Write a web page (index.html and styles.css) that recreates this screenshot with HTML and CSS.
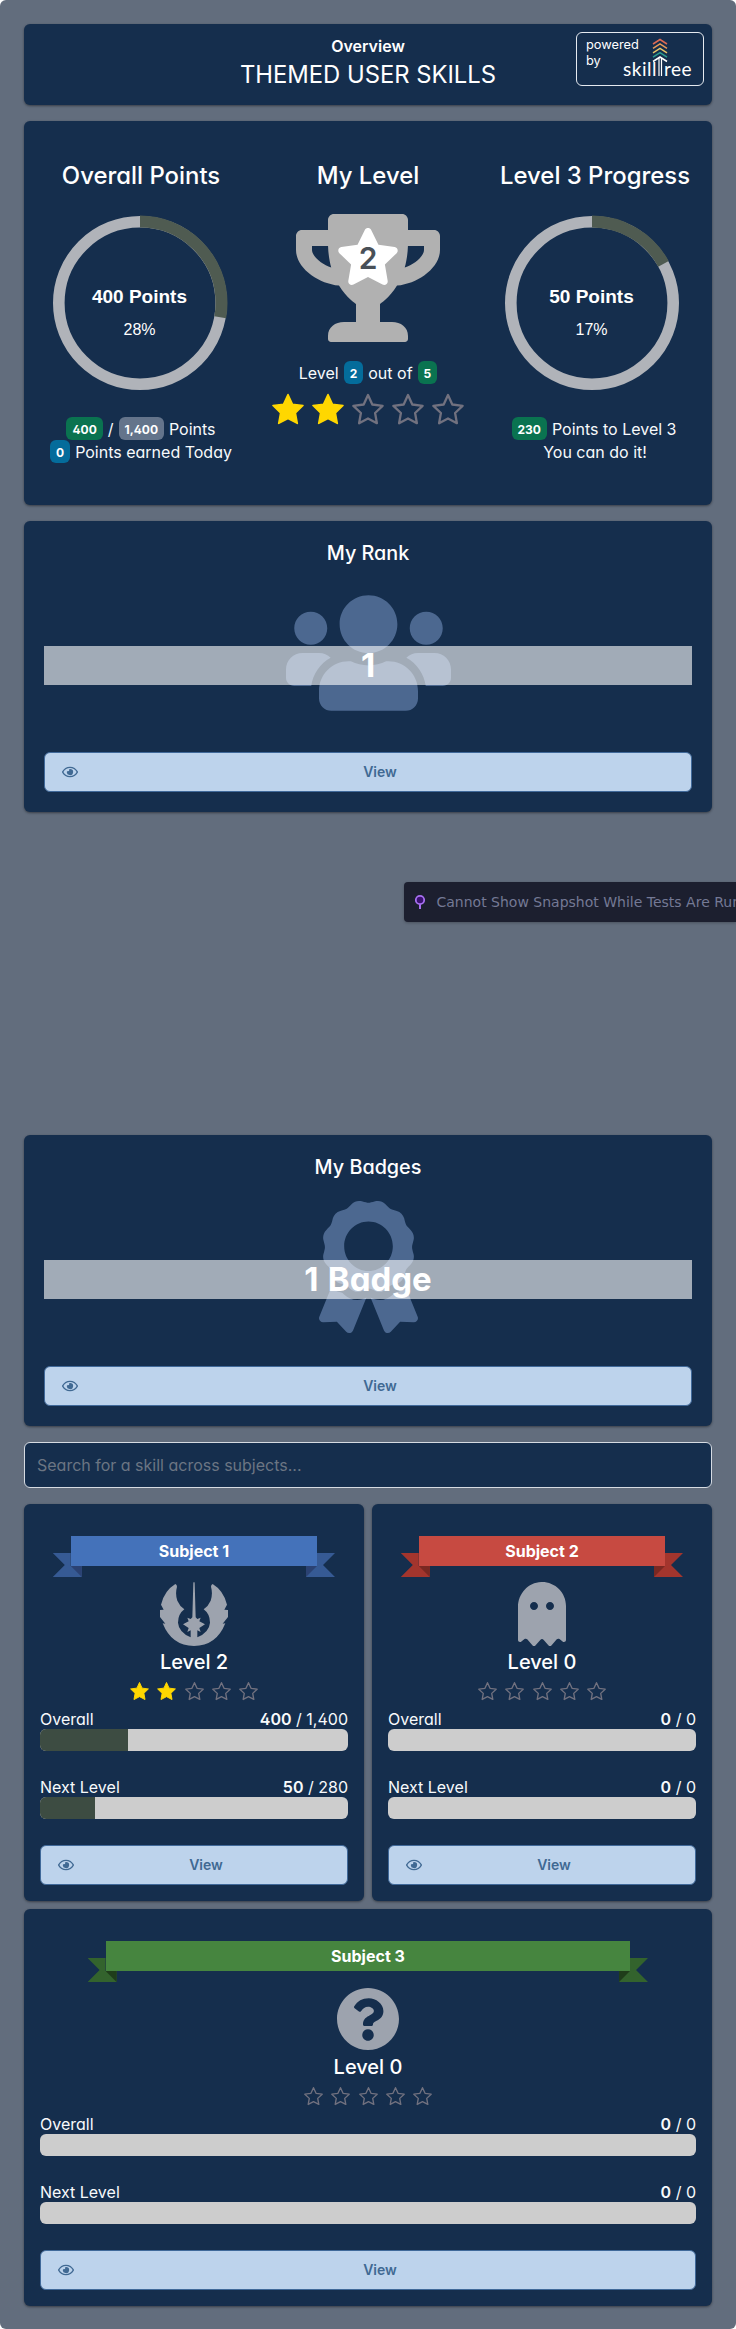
FILE: index.html
```html
<!DOCTYPE html>
<html lang="en">
<head>
<meta charset="utf-8">
<title>Themed User Skills</title>
<link rel="stylesheet" href="styles.css">
</head>
<body>
<svg class="defs" width="0" height="0" aria-hidden="true">
  <symbol id="star" viewBox="0 0 576 512"><path d="M259.3 17.8L194 150.2 47.9 171.5c-26.2 3.8-36.7 36.1-17.7 54.6l105.7 103-25 145.5c-4.5 26.3 23.2 46 46.4 33.7L288 439.6l130.7 68.7c23.2 12.2 50.9-7.4 46.4-33.7l-25-145.5 105.7-103c19-18.5 8.5-50.8-17.7-54.6L382 150.2 316.7 17.8c-11.7-23.6-45.6-23.9-57.4 0z"/></symbol>
  <symbol id="rate-on" viewBox="0 0 32 32"><path d="M16 1.6l4.4 9.6 10.6 1.3-7.6 7.4 1.9 10.5L16 25.5l-9.3 4.9 1.9-10.5L1 12.5l10.6-1.3z" fill="#ffd700" stroke="#ffd700" stroke-width="1.6" stroke-linejoin="round"/></symbol>
  <symbol id="rate-off" viewBox="0 0 32 32"><path d="M16 2l4.3 9.5 10.3 1.4-7.5 7.1 1.8 10.2L16 25.4l-8.9 4.8L8.9 20l-7.5-7.1 10.3-1.4z" fill="none" stroke="#71717f" stroke-width="2.3" stroke-linejoin="round"/></symbol>
  <symbol id="eye" viewBox="0 0 576 512"><path d="M288 144a110.9 110.9 0 0 0-31.2 5 55.4 55.4 0 0 1 7.2 27 56 56 0 0 1-56 56 55.4 55.4 0 0 1-27-7.200A111.700 111.700 0 1 0 288 144zm284.500 97.400C518.300 135.600 410.900 64 288 64S57.700 135.600 3.500 241.400a32.400 32.400 0 0 0 0 29.200C57.700 376.400 165.100 448 288 448s230.300-71.600 284.500-177.400a32.400 32.400 0 0 0 0-29.200zM288 400c-98.700 0-189.100-55-237.900-144C98.900 167 189.300 112 288 112s189.100 55 237.900 144C477.100 345 386.700 400 288 400z"/></symbol>
</svg>
<main class="page">
  <header class="card header">
    <h1 class="header-label">Overview</h1>
    <div class="header-title">THEMED USER SKILLS</div>
    <div class="powered">
      <span class="powered-text">powered<br>by</span>
      <span class="brand"><span class="brand-skill">skill</span>ree</span>
      <svg class="brand-tree" width="16" height="38" viewBox="0 0 16 38" fill="none" stroke-width="1.5">
        <path d="M1 6l7-4.500 7 4.500" stroke="#dd6b53"/>
        <path d="M1 10.400l7-4.500 7 4.500" stroke="#e99a58"/>
        <path d="M1 14.800l7-4.500 7 4.500" stroke="#e6c468"/>
        <path d="M1 19.200l7-4.500 7 4.500" stroke="#2a9d8f"/>
        <path d="M1 23.500l7-4.500 7 4.500" stroke="#fff"/>
        <path d="M7 20v18M9.500 20v18" stroke="#fff" stroke-width="1.200"/>
      </svg>
    </div>
  </header>

  <section class="card stats">
    <div class="stat">
      <h2>Overall Points</h2>
      <div class="ring">
        <svg width="176" height="176" viewBox="0 0 176 176" fill="none">
          <circle cx="88" cy="88" r="81.200" stroke="#b0b3b9" stroke-width="11.600"/>
          <circle cx="88" cy="88" r="81.500" stroke="#4f5b51" stroke-width="12" pathLength="100" stroke-dasharray="27.800 100" transform="rotate(-90 88 88)"/>
        </svg>
        <div class="ring-text"><b>400 Points</b><span>28%</span></div>
      </div>
      <div class="line"><span class="tag green">400</span><span>/</span><span class="tag gray">1,400</span><span>Points</span></div>
      <div class="line"><span class="tag blue">0</span><span>Points earned Today</span></div>
    </div>
    <div class="stat middle">
      <h2>My Level</h2>
      <div class="trophy">
        <svg width="144" height="128" viewBox="0 0 576 512" fill="#b1b1b1"><path d="M552 64H448V24c0-13.300-10.700-24-24-24H152c-13.300 0-24 10.700-24 24v40H24C10.700 64 0 74.700 0 88v56c0 35.700 22.500 72.400 61.900 100.700 31.500 22.700 69.800 37.100 110 41.700C203.300 338.500 240 360 240 360v72h-48c-35.300 0-64 20.700-64 56v12c0 6.600 5.400 12 12 12h296c6.600 0 12-5.400 12-12v-12c0-35.300-28.700-56-64-56h-48v-72s36.700-21.500 68.100-73.600c40.300-4.600 78.600-19 110-41.700 39.300-28.300 61.900-65 61.900-100.700V88c0-13.300-10.700-24-24-24zM99.300 192.800C74.900 175.200 64 155.600 64 144v-16h64.200c1 32.600 5.800 61.200 12.800 86.200-15.100-5.200-29.200-12.400-41.700-21.400zM512 144c0 16.100-17.700 36.100-35.300 48.800-12.500 9-26.700 16.200-41.800 21.400 7-25 11.800-53.600 12.800-86.200H512v16z"/></svg>
        <svg class="trophy-star" width="64" height="57" viewBox="0 0 576 512"><use href="#star" fill="#fff"/></svg>
        <span class="trophy-num">2</span>
      </div>
      <div class="line level-line"><span>Level</span><span class="tag blue">2</span><span>out of</span><span class="tag green">5</span></div>
      <div class="rating">
        <svg><use href="#rate-on"/></svg><svg><use href="#rate-on"/></svg><svg><use href="#rate-off"/></svg><svg><use href="#rate-off"/></svg><svg><use href="#rate-off"/></svg>
      </div>
    </div>
    <div class="stat">
      <h2>Level 3 Progress</h2>
      <div class="ring right">
        <svg width="176" height="176" viewBox="0 0 176 176" fill="none">
          <circle cx="88" cy="88" r="81.200" stroke="#b0b3b9" stroke-width="11.600"/>
          <circle cx="88" cy="88" r="81.500" stroke="#4f5b51" stroke-width="12" pathLength="100" stroke-dasharray="17 100" transform="rotate(-90 88 88)"/>
        </svg>
        <div class="ring-text"><b>50 Points</b><span>17%</span></div>
      </div>
      <div class="line right-line"><span class="tag green">230</span><span>Points to Level 3</span></div>
      <div class="line">You can do it!</div>
    </div>
  </section>

  <section class="card feature">
    <h3>My Rank</h3>
    <div class="feature-art">
      <svg width="165" height="132" viewBox="0 0 640 512" fill="#4c6890"><path d="M96 224c35.300 0 64-28.700 64-64s-28.700-64-64-64-64 28.700-64 64 28.700 64 64 64zm448 0c35.300 0 64-28.700 64-64s-28.700-64-64-64-64 28.700-64 64 28.700 64 64 64zm32 32h-64c-17.600 0-33.500 7.100-45.100 18.600 40.300 22.100 68.900 62 75.100 109.400h66c17.700 0 32-14.300 32-32v-32c0-35.300-28.700-64-64-64zm-256 0c61.900 0 112-50.100 112-112S381.900 32 320 32 208 82.100 208 144s50.100 112 112 112zm76.800 32h-8.300c-20.800 10-43.900 16-68.500 16s-47.600-6-68.500-16h-8.300C179.600 288 128 339.600 128 403.200V432c0 26.500 21.500 48 48 48h288c26.500 0 48-21.500 48-48v-28.800c0-63.600-51.600-115.200-115.200-115.200zm-223.700-13.400C161.500 263.100 145.600 256 128 256H64c-35.300 0-64 28.700-64 64v32c0 17.700 14.300 32 32 32h65.900c6.300-47.400 34.900-87.300 75.200-109.400z"/></svg>
      <div class="band">1</div>
    </div>
    <a class="view"><svg class="eye"><use href="#eye"/></svg><span>View</span></a>
  </section>

  <section class="chart-slot">
    <div class="snapshot">
      <svg width="12" height="16" viewBox="0 0 12 16"><path d="M6 9v6" stroke="#a66ff0" stroke-width="2"/><circle cx="6" cy="6" r="4.200" fill="#3b1170" stroke="#a66ff0" stroke-width="1.800"/></svg>
      <span>Cannot Show Snapshot While Tests Are Running</span>
    </div>
  </section>

  <section class="card feature">
    <h3>My Badges</h3>
    <div class="feature-art">
      <svg width="99" height="132" viewBox="0 0 384 512" fill="#4c6890"><path d="M97.120 362.630c-8.690-8.690-4.160-6.240-25.120-11.850-9.510-2.550-17.870-7.450-25.430-13.320L1.200 448.700c-4.390 10.770 3.810 22.470 15.430 22.030l52.690-2.010L105.560 507c8 8.440 22.040 5.810 26.430-4.960l52.050-127.620c-10.840 6.040-22.870 9.580-35.310 9.580-19.500 0-37.820-7.590-51.610-21.370zM382.800 448.700l-45.370-111.240c-7.560 5.880-15.920 10.770-25.430 13.320-21.070 5.640-16.450 3.180-25.120 11.850-13.790 13.780-32.120 21.370-51.620 21.370-12.440 0-24.470-3.550-35.310-9.580L252 502.040c4.390 10.770 18.440 13.400 26.430 4.960l36.250-38.280 52.690 2.010c11.620.440 19.820-11.270 15.430-22.030zM263 340c15.280-15.550 17.030-14.210 38.790-20.140 13.890-3.790 24.750-14.840 28.470-28.980 7.480-28.400 5.540-24.970 25.950-45.750 10.170-10.350 14.140-25.440 10.420-39.580-7.470-28.380-7.480-24.420 0-52.830 3.720-14.140-.250-29.230-10.420-39.580-20.410-20.780-18.470-17.360-25.950-45.750-3.720-14.140-14.580-25.190-28.470-28.980-27.880-7.610-24.520-5.620-44.950-26.410-10.170-10.350-25-14.400-38.890-10.610-27.870 7.600-23.980 7.610-51.900 0-13.890-3.790-28.720.250-38.890 10.610-20.410 20.780-17.050 18.800-44.940 26.410-13.890 3.790-24.750 14.840-28.470 28.980-7.470 28.390-5.540 24.970-25.950 45.750-10.170 10.350-14.150 25.440-10.420 39.580 7.470 28.360 7.480 24.400 0 52.820-3.720 14.140.250 29.230 10.420 39.590 20.410 20.780 18.470 17.350 25.950 45.750 3.720 14.140 14.580 25.190 28.470 28.980C104.600 325.960 106.270 325 121 340c13.230 13.470 33.840 15.880 49.740 5.820a39.676 39.676 0 0 1 42.530 0c15.890 10.060 36.500 7.650 49.730-5.820zM97.660 175.960c0-53.030 42.240-96.020 94.340-96.020s94.340 42.990 94.340 96.020-42.240 96.020-94.340 96.020-94.340-42.990-94.340-96.020z"/></svg>
      <div class="band">1 Badge</div>
    </div>
    <a class="view"><svg class="eye"><use href="#eye"/></svg><span>View</span></a>
  </section>

  <input class="search" type="text" placeholder="Search for a skill across subjects...">

  <section class="subjects">
    <article class="card subject">
      <div class="ribbon blue-ribbon"><i class="tail left"></i><i class="tail right"></i><b>Subject 1</b></div>
      <svg class="subject-icon" width="80" height="64" viewBox="-3 12 240 192" fill="#9da3ae"><path d="M61 18Q66 20 66 26Q60 48 67 68Q74 84 88 94Q69 108 69 134Q71 162 107 178V157L97 162L101 150L84 139L101 130L97 119L107 123L112 118L115 14Q117 10 119 14L122 118L127 123L137 119L133 130L150 139L133 150L137 162L127 157V178Q163 162 165 134Q165 108 146 94Q160 84 167 68Q174 48 168 26Q168 20 173 18Q206 38 216 80L208 95L219 96V117L203 137L211 136Q184 204 117 204Q50 204 23 136L31 137L15 117V96L26 95L18 80Q28 38 61 18z"/></svg>
      <h4>Level 2</h4>
      <div class="rating small"><svg><use href="#rate-on"/></svg><svg><use href="#rate-on"/></svg><svg><use href="#rate-off"/></svg><svg><use href="#rate-off"/></svg><svg><use href="#rate-off"/></svg></div>
      <div class="progress-label"><span>Overall</span><span><b>400</b> / 1,400</span></div>
      <div class="bar"><div class="bar-fill" style="width:28.570%"></div></div>
      <div class="progress-label next"><span>Next Level</span><span><b>50</b> / 280</span></div>
      <div class="bar"><div class="bar-fill" style="width:17.860%"></div></div>
      <a class="view"><svg class="eye"><use href="#eye"/></svg><span>View</span></a>
    </article>
    <article class="card subject">
      <div class="ribbon red-ribbon"><i class="tail left"></i><i class="tail right"></i><b>Subject 2</b></div>
      <svg class="subject-icon" width="48" height="64" viewBox="0 0 384 512" fill="#9da3ae"><path d="M186.100.090C81.010 3.240 0 94.920 0 200.050v263.920c0 14.260 17.230 21.390 27.310 11.310l24.920-18.530c6.660-4.950 16-3.990 21.510 2.210l42.950 48.350c6.250 6.250 16.380 6.250 22.630 0l40.720-45.850c6.370-7.170 17.560-7.170 23.920 0l40.720 45.850c6.250 6.250 16.380 6.250 22.630 0l42.950-48.350c5.510-6.200 14.850-7.170 21.510-2.210l24.920 18.530c10.080 10.080 27.310 2.940 27.310-11.310V192C384 84 294.830-3.170 186.100.090zM128 224c-17.670 0-32-14.330-32-32s14.330-32 32-32 32 14.330 32 32-14.330 32-32 32zm128 0c-17.670 0-32-14.330-32-32s14.330-32 32-32 32 14.330 32 32-14.330 32-32 32z"/></svg>
      <h4>Level 0</h4>
      <div class="rating small"><svg><use href="#rate-off"/></svg><svg><use href="#rate-off"/></svg><svg><use href="#rate-off"/></svg><svg><use href="#rate-off"/></svg><svg><use href="#rate-off"/></svg></div>
      <div class="progress-label"><span>Overall</span><span><b>0</b> / 0</span></div>
      <div class="bar"></div>
      <div class="progress-label next"><span>Next Level</span><span><b>0</b> / 0</span></div>
      <div class="bar"></div>
      <a class="view"><svg class="eye"><use href="#eye"/></svg><span>View</span></a>
    </article>
    <article class="card subject wide">
      <div class="ribbon green-ribbon"><i class="tail left"></i><i class="tail right"></i><b>Subject 3</b></div>
      <svg class="subject-icon" width="64" height="64" viewBox="0 0 512 512" fill="#9da3ae"><path d="M504 256c0 136.997-111.043 248-248 248S8 392.997 8 256C8 119.083 119.043 8 256 8s248 111.083 248 248zM262.655 90c-54.497 0-89.255 22.957-116.549 63.758-3.536 5.286-2.353 12.415 2.715 16.258l34.699 26.310c5.205 3.947 12.621 3.008 16.665-2.122 17.864-22.658 30.113-35.797 57.303-35.797 20.429 0 45.698 13.148 45.698 32.958 0 14.976-12.363 22.667-32.534 33.976C247.128 238.528 216 254.941 216 296v4c0 6.627 5.373 12 12 12h56c6.627 0 12-5.373 12-12v-1.333c0-28.462 83.186-29.647 83.186-106.667 0-58.002-60.165-102-116.531-102zM256 338c-25.365 0-46 20.635-46 46 0 25.364 20.635 46 46 46s46-20.636 46-46c0-25.365-20.635-46-46-46z"/></svg>
      <h4>Level 0</h4>
      <div class="rating small"><svg><use href="#rate-off"/></svg><svg><use href="#rate-off"/></svg><svg><use href="#rate-off"/></svg><svg><use href="#rate-off"/></svg><svg><use href="#rate-off"/></svg></div>
      <div class="progress-label"><span>Overall</span><span><b>0</b> / 0</span></div>
      <div class="bar"></div>
      <div class="progress-label next"><span>Next Level</span><span><b>0</b> / 0</span></div>
      <div class="bar"></div>
      <a class="view"><svg class="eye"><use href="#eye"/></svg><span>View</span></a>
    </article>
  </section>
</main>
</body>
</html>
```
FILE: styles.css
```css
* { box-sizing: border-box; }
body {
  margin: 0;
  background: #fff;
  color: #f8fafc;
  font: 400 16px/24px Inter, "Liberation Sans", sans-serif;
  font-feature-settings: "cv02", "cv03", "cv04", "cv11";
}
h1, h2, h3, h4 { margin: 0; font-weight: 500; color: #fff; }
svg { display: block; flex: none; }
.defs { position: absolute; }
.page {
  height: 2329px;
  padding: 24px;
  background: #626d7d;
  border-radius: 6px;
  overflow: hidden;
}
.card {
  background: #152e4d;
  border-radius: 6px;
  box-shadow: 0 1px 3px rgba(0, 0, 0, .2), 0 1px 2px rgba(0, 0, 0, .25);
}

/* Header */
.header { position: relative; height: 81px; padding-top: 10px; text-align: center; color: #fff; }
.header-label { font-size: 16px; line-height: 24px; font-weight: 600; }
.header-title { font-size: 23.800px; line-height: 33px; }
.powered {
  position: absolute;
  top: 8px;
  right: 8px;
  width: 128px;
  height: 54px;
  border: 1px solid #e5eaf0;
  border-radius: 6px;
}
.powered-text { position: absolute; left: 9px; top: 4px; font-size: 12.800px; line-height: 15.500px; text-align: left; }
.brand { position: absolute; left: 46px; top: 24px; display: flex; font: 400 19px/24px Lato, sans-serif; letter-spacing: .5px; white-space: nowrap; }
.brand-skill { width: 41px; text-align: left; }
.brand-tree { position: absolute; left: 75px; top: 5px; }

/* Stats */
.stats {
  display: grid;
  grid-template-columns: 218px 1fr 218px;
  height: 384px;
  margin-top: 16px;
  padding: 38px 8px 0;
}
.stat { display: flex; flex-direction: column; align-items: center; }
.stat h2 { font-size: 23.900px; line-height: 33px; white-space: nowrap; }
.ring { position: relative; margin: 23px 3px 26px 0; }
.ring.right { margin-right: 7px; }
.ring-text {
  position: absolute;
  inset: 0;
  display: flex;
  flex-direction: column;
  align-items: center;
  padding-top: 70px;
  font-family: "Liberation Sans", Arial, sans-serif;
  color: #fff;
}
.ring-text b { font-size: 19px; line-height: 24px; }
.ring-text span { margin-top: 11px; font-size: 16px; line-height: 20px; }
.line { display: flex; align-items: center; gap: 5px; height: 23px; line-height: 22px; white-space: nowrap; }
.right-line { margin-right: 2px; }
.tag {
  height: 23px;
  padding: 1px 6px 0;
  border-radius: 6px;
  color: #fff;
  font-size: 12px;
  line-height: 23px;
  font-weight: 700;
}
.green { background: #0a7350; }
.blue { background: #046c9b; }
.gray { background: #64748b; }
.trophy { position: relative; margin-top: 22px; }
.trophy-star { position: absolute; left: 40px; top: 14px; }
.trophy-num { position: absolute; inset: 27px 0 auto; text-align: center; font-size: 30px; line-height: 34px; font-weight: 600; color: #495057; }
.level-line { margin-top: 19px; }
.rating { display: flex; gap: 8px; margin-top: 9px; }
.rating svg { width: 32px; height: 32px; }
.rating.small { gap: 8.200px; margin: 5px 0 0; }
.rating.small svg { width: 19px; height: 20px; }

/* Rank and badges */
.feature { height: 291px; margin-top: 16px; padding: 16px 20px 0; display: flex; flex-direction: column; }
.feature h3 { font-size: 19.800px; line-height: 32px; text-align: center; }
.feature-art { position: relative; height: 132px; margin-top: 18px; display: flex; justify-content: center; }
.band {
  position: absolute;
  left: 0;
  right: 0;
  top: 59px;
  height: 39px;
  background: rgba(255, 255, 255, .6);
  color: #fff;
  font-size: 33px;
  line-height: 39px;
  font-weight: 700;
  word-spacing: 1.500px;
  text-align: center;
}
.view {
  display: flex;
  align-items: center;
  gap: 8px;
  width: 100%;
  height: 40px;
  padding: 0 17px;
  border: 1px solid #40699a;
  border-radius: 6px;
  background: #bdd3ec;
  color: #406993;
  font-size: 14px;
  font-weight: 600;
}
.view span { flex: 1; text-align: center; }
.eye { width: 16px; height: 16px; fill: #406993; }
.feature .view { margin-top: 33px; }

.chart-slot { height: 323px; margin-right: -24px; padding: 70px 0 0 380px; }
.chart-slot + .feature { margin-top: 0; }
.snapshot {
  display: flex;
  align-items: center;
  gap: 10.500px;
  height: 40px;
  padding-left: 10px;
  overflow: hidden;
  border-radius: 4px 0 0 4px;
  background: #1c1f2f;
  box-shadow: 0 1px 3px rgba(0, 0, 0, .25);
  color: #747995;
  font: 14px/20px "DejaVu Sans", sans-serif;
  white-space: nowrap;
}

/* Search */
.search {
  display: block;
  width: 100%;
  height: 46px;
  margin: 16px 0;
  padding: 0 12px;
  border: 1px solid #d6dbe2;
  border-radius: 6px;
  background: #152e4d;
  font: inherit;
  font-feature-settings: inherit;
}
.search::placeholder { color: #6b7583; }

/* Subjects */
.subjects { display: grid; grid-template-columns: 1fr 1fr; gap: 8px; }
.subject { height: 397px; padding: 32px 16px 0; display: flex; flex-direction: column; align-items: center; }
.wide { grid-column: 1 / -1; }
.ribbon { position: relative; z-index: 0; width: 80%; height: 30px; background: var(--face); color: #fff; text-align: center; line-height: 30px; }
.ribbon b { font-weight: 700; }
.blue-ribbon { --face: #4472ba; --tail: #365a94; --fold: #2b4273; }
.red-ribbon { --face: #c74a41; --tail: #a3352d; --fold: #7a2822; }
.green-ribbon { --face: #46853f; --tail: #33632d; --fold: #1f3d1a; }
.tail { position: absolute; top: 17px; width: 29px; height: 24px; }
.tail::before, .tail::after { content: ""; position: absolute; }
.tail::before { inset: 0; background: var(--tail); clip-path: polygon(0 0, 18px 0, 18px 13px, 29px 13px, 29px 100%, 0 100%, 12px 50%); }
.tail::after { left: 18px; top: 13px; width: 11px; height: 11px; background: var(--fold); clip-path: polygon(0 0, 100% 0, 100% 100%); }
.tail.left { left: -18px; }
.tail.right { right: -18px; transform: scaleX(-1); }
.subject-icon { margin-top: 16px; }
.subject h4 { margin-top: 3px; font-size: 20px; line-height: 27px; }
.progress-label { display: flex; justify-content: space-between; width: 100%; margin-top: 8px; line-height: 20px; }
.progress-label b { font-weight: 600; }
.progress-label.next { margin-top: 26px; }
.bar { width: 100%; height: 22px; border-radius: 6px; background: #cdcdcd; overflow: hidden; }
.bar-fill { height: 100%; background: #3d4c42; }
.subject .view { margin-top: 26px; }
```
